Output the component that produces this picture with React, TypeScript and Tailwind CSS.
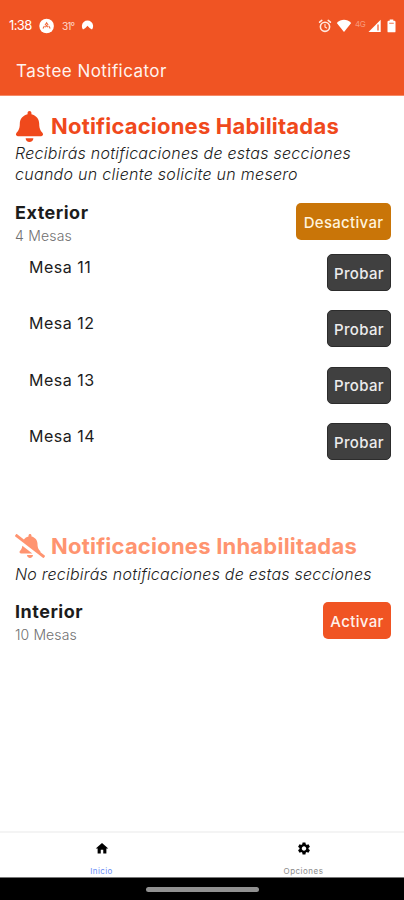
import { FaBell, FaBellSlash } from "react-icons/fa";
import { MdHome, MdSettings } from "react-icons/md";

const tables = ["Mesa 11", "Mesa 12", "Mesa 13", "Mesa 14"];

function StatusBar() {
  return (
    <div className="flex h-[51px] items-center pl-[9px] pr-[8px] text-white">
      <span className="w-[30px] text-[13px] leading-none tracking-[-0.6px]">1:38</span>
      <svg width="16" height="16" viewBox="0 0 16 16">
        <circle cx="7.6" cy="8" r="7.3" fill="#fff" />
        <path d="M4 10.6 5.4 8M6 7.2 7.6 4.8 9.2 7.2M6.4 9.2 7.6 7.4 8.8 9.2M9.8 8l1.4 2.6" stroke="#f1673b" strokeWidth="1.1" fill="none" />
      </svg>
      <span className="ml-[7px] w-[19px] text-[10px] leading-none tracking-[-0.9px] text-[#ffd9cc]">31°</span>
      <svg width="13" height="12" viewBox="0 0 13 12">
        <path d="M2 9.5A5.6 5.6 0 1 1 11 9.5L8.9 8.2 7.6 7 6.5 5.8 5.4 7 4.1 8.2Z" fill="#fff" />
      </svg>
      <div className="flex-1" />
      <svg width="14" height="14" viewBox="0 0 14 14" fill="none" stroke="#ffe8df" strokeLinecap="round">
        <circle cx="7" cy="7.8" r="4.6" strokeWidth="1.6" />
        <path d="M1.6 3.2 3.8 1.4M12.4 3.2 10.2 1.4" strokeWidth="1.6" />
        <path d="M7 5.4V8L8.6 9" strokeWidth="1.1" />
      </svg>
      <svg className="ml-[4px]" width="16" height="14" viewBox="0 0 16 14">
        <path d="M.8 4C5-.4 11-.4 15.2 4L8 13Z" fill="#fff" />
      </svg>
      <span className="ml-[3px] w-[13px] -translate-y-[2px] text-[8px] leading-none tracking-[-0.3px] text-[#f89a7b]">4G</span>
      <svg width="14" height="14" viewBox="0 0 14 14">
        <path d="M.5 13 12.7.8V13Z" fill="#fff" />
        <path d="M10 5.5V11.6" stroke="#f3744c" strokeWidth="1.5" />
      </svg>
      <svg className="ml-[5px]" width="9" height="14" viewBox="0 0 9 14">
        <path d="M.5 3Q.5 1.8 1.7 1.8H2.7V.5H6.3V1.8H7.3Q8.5 1.8 8.5 3V12.4Q8.5 13.3 7.5 13.3H1.5Q.5 13.3.5 12.4Z" fill="#fff" />
        <path d="M2.2 4.3H6.8" stroke="#f5896a" strokeWidth="1.2" />
      </svg>
    </div>
  );
}

export default function App() {
  return (
    <div className="flex h-[900px] w-[404px] flex-col overflow-hidden bg-white font-['Inter',sans-serif] text-[#1c1c1c]">
      <header className="h-[96px] shrink-0 border-b border-[#f58a66] bg-[#f05423]">
        <StatusBar />
        <h1 className="pl-4 pt-[7px] text-[17px] leading-[26px] tracking-[0.45px] text-[#fff3ee]">Tastee Notificator</h1>
      </header>

      <main className="flex-1 pl-[15px] pr-[13px]">
        <section className="h-[427px] pt-[14px]">
          <div className="flex h-[33px] items-center text-[#f0491c]">
            <FaBell className="h-[31px] w-[29px]" />
            <h2 className="ml-[7px] whitespace-nowrap text-[22px] font-bold tracking-[0.2px]">Notificaciones Habilitadas</h2>
          </div>
          <p className="h-[41px] whitespace-nowrap text-[16px] font-light italic leading-[20.5px]">
            <span className="block tracking-[0.26px]">Recibirás notificaciones de estas secciones</span>
            <span className="block tracking-[0.29px]">cuando un cliente solicite un mesero</span>
          </p>
          <div className="mt-[19px] flex h-[47px] justify-between">
            <div className="whitespace-nowrap">
              <h3 className="text-[18px] font-bold leading-[20px] tracking-[0.5px]">Exterior</h3>
              <p className="mt-[3px] text-[14px] font-light leading-[20px] tracking-[0.2px] text-[#707070]">4 Mesas</p>
            </div>
            <button className="flex h-[37px] w-[95px] items-center justify-center rounded-[5px] bg-[#c97508] pt-[3px] text-[15px] font-medium tracking-[0.3px] text-[#fff3dd]">Desactivar</button>
          </div>
          <ul className="mt-[4px]">
            {tables.map((name) => (
              <li key={name} className="flex h-[56.25px] justify-between pl-[14px]">
                <span className="text-[16px] leading-[27px] tracking-[0.5px]">{name}</span>
                <button className="flex h-[37px] w-[64px] items-center justify-center rounded-[5px] border border-[#2c2c2c] bg-[#404040] pt-[3px] text-[15px] font-medium tracking-[0.35px] text-[#ececec]">Probar</button>
              </li>
            ))}
          </ul>
        </section>

        <section className="pt-[6px]">
          <div className="flex h-[34px] items-center text-[#ff9470]">
            <FaBellSlash className="h-[24px] w-[30px]" />
            <h2 className="ml-[6px] whitespace-nowrap text-[22px] font-bold tracking-[0.22px]">Notificaciones Inhabilitadas</h2>
          </div>
          <p className="mt-px h-[21px] whitespace-nowrap text-[16px] font-light italic leading-[20.5px] tracking-[0.22px]">No recibirás notificaciones de estas secciones</p>
          <div className="mt-[17px] flex justify-between">
            <div className="whitespace-nowrap">
              <h3 className="text-[18px] font-bold leading-[20px] tracking-[0.5px]">Interior</h3>
              <p className="mt-[3px] text-[14px] font-light leading-[20px] tracking-[0.1px] text-[#707070]">10 Mesas</p>
            </div>
            <button className="flex h-[37px] w-[68px] items-center justify-center rounded-[5px] bg-[#f05423] pt-[3px] text-[15px] font-medium tracking-[0.35px] text-[#fff1eb]">Activar</button>
          </div>
        </section>
      </main>

      <nav className="flex h-[46px] shrink-0 border-t-2 border-[#f4f4f4]">
        <a className="flex w-[203px] flex-col items-center pt-[8px]">
          <MdHome size={18} color="#000" />
          <span className="mt-[9px] text-[8px] leading-[12px] tracking-[0.4px] text-[#6b8df5]">Inicio</span>
        </a>
        <a className="flex flex-1 flex-col items-center pt-[8px]">
          <MdSettings size={18} color="#000" />
          <span className="mt-[9px] text-[8px] leading-[12px] tracking-[0.5px] text-[#8c8c8c]">Opciones</span>
        </a>
      </nav>
      <div className="flex h-[23px] shrink-0 justify-center border-t border-[#777] bg-black pt-[9px]">
        <div className="h-[5px] w-[113px] rounded-full bg-[#919191]" />
      </div>
    </div>
  );
}
